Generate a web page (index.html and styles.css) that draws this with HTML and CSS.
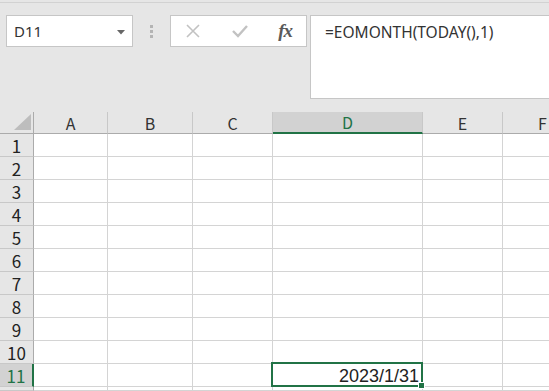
FILE: index.html
```html
<!DOCTYPE html>
<html lang="zh">
<head>
    <meta charset="UTF-8">
    <title>EOMONTH</title>
    <link rel="stylesheet" href="styles.css">
</head>
<body>
    <div class="toolbar">
        <div class="name-box">
            <span>D11</span>
            <svg class="arrow" width="8" height="5" viewBox="0 0 8 5"><polygon points="0,0 8,0 4,4.5" fill="#666"/></svg>
        </div>
        <div class="grip"><i></i><i></i><i></i></div>
        <div class="fx-buttons">
            <svg width="16" height="16" viewBox="0 0 16 16"><path d="M2 2 L14 14 M14 2 L2 14" stroke="#c2c2c2" stroke-width="1.6" fill="none"/></svg>
            <svg width="18" height="16" viewBox="0 0 18 16"><path d="M2 8 L7 13 L16 3" stroke="#c2c2c2" stroke-width="2.4" fill="none"/></svg>
            <span class="fx">fx</span>
        </div>
        <div class="formula">=EOMONTH(TODAY(),1)</div>
    </div>

    <div class="sheet">
        <div class="cell corner"><svg width="17" height="16" viewBox="0 0 17 16"><polygon points="17,0 17,16 0,16" fill="#bdbdbd"/></svg></div>
        <div class="cell col-head">A</div>
        <div class="cell col-head">B</div>
        <div class="cell col-head">C</div>
        <div class="cell col-head active">D</div>
        <div class="cell col-head">E</div>
        <div class="cell col-head edge">F</div>

        <div class="cell row-head">1</div><div class="cell"></div><div class="cell"></div><div class="cell"></div><div class="cell"></div><div class="cell"></div><div class="cell"></div>
        <div class="cell row-head">2</div><div class="cell"></div><div class="cell"></div><div class="cell"></div><div class="cell"></div><div class="cell"></div><div class="cell"></div>
        <div class="cell row-head">3</div><div class="cell"></div><div class="cell"></div><div class="cell"></div><div class="cell"></div><div class="cell"></div><div class="cell"></div>
        <div class="cell row-head">4</div><div class="cell"></div><div class="cell"></div><div class="cell"></div><div class="cell"></div><div class="cell"></div><div class="cell"></div>
        <div class="cell row-head">5</div><div class="cell"></div><div class="cell"></div><div class="cell"></div><div class="cell"></div><div class="cell"></div><div class="cell"></div>
        <div class="cell row-head">6</div><div class="cell"></div><div class="cell"></div><div class="cell"></div><div class="cell"></div><div class="cell"></div><div class="cell"></div>
        <div class="cell row-head">7</div><div class="cell"></div><div class="cell"></div><div class="cell"></div><div class="cell"></div><div class="cell"></div><div class="cell"></div>
        <div class="cell row-head">8</div><div class="cell"></div><div class="cell"></div><div class="cell"></div><div class="cell"></div><div class="cell"></div><div class="cell"></div>
        <div class="cell row-head">9</div><div class="cell"></div><div class="cell"></div><div class="cell"></div><div class="cell"></div><div class="cell"></div><div class="cell"></div>
        <div class="cell row-head">10</div><div class="cell"></div><div class="cell"></div><div class="cell"></div><div class="cell"></div><div class="cell"></div><div class="cell"></div>
        <div class="cell row-head active">11</div><div class="cell"></div><div class="cell"></div><div class="cell"></div><div class="cell value selected">2023/1/31</div><div class="cell"></div><div class="cell"></div>
        <div class="cell row-head"></div><div class="cell"></div><div class="cell"></div><div class="cell"></div><div class="cell"></div><div class="cell"></div><div class="cell"></div>
    </div>
</body>
</html>
```

FILE: styles.css
```css
/* 全体 */
html, body {
    overflow: hidden;
}

body {
    margin: 0;
    height: 391px;
    background-color: #e6e6e6;
    font-family: 'Noto Sans', 'Noto Sans CJK SC', sans-serif;
    color: #222;
}

/* 数式バー */
.toolbar {
    display: flex;
    align-items: flex-start;
    margin-top: 2px;
    border-top: 1px solid #d2d2d2;
    padding-top: 12px;
    margin-bottom: 13px;
    height: 84px;
}

.name-box {
    margin-left: 6px;
    width: 127px;
    height: 32px;
    box-sizing: border-box;
    border: 1px solid #c6c6c6;
    background-color: #fff;
    display: flex;
    align-items: center;
    justify-content: space-between;
    padding: 0 7px 0 7px;
    font-size: 15px;
    color: #333;
}

.name-box .arrow {
    margin-top: 2px;
}

.grip {
    width: 37px;
    height: 32px;
    display: flex;
    flex-direction: column;
    align-items: center;
    justify-content: center;
    gap: 2px;
}

.grip i {
    display: block;
    width: 3px;
    height: 3px;
    background-color: #b4b4b4;
}

.fx-buttons {
    width: 137px;
    height: 32px;
    box-sizing: border-box;
    border: 1px solid #c6c6c6;
    background-color: #fff;
    display: flex;
    align-items: center;
    justify-content: space-between;
    padding: 0 14px 0 14px;
}

.fx {
    font-family: 'Liberation Serif', 'DejaVu Serif', serif;
    font-style: italic;
    font-weight: bold;
    font-size: 19px;
    color: #5a5a5a;
    letter-spacing: -1px;
}

.formula {
    flex: 1;
    margin-left: 3px;
    height: 84px;
    box-sizing: border-box;
    border: 1px solid #c6c6c6;
    border-right: none;
    background-color: #fff;
    padding: 5px 14px;
    font-size: 15.5px;
    color: #333;
}

/* シート */
.sheet {
    display: grid;
    grid-template-columns: 34px 74px 85px 80px 150px 80px 1fr;
    grid-template-rows: 22px repeat(11, 23px) 1fr;
    height: 279px;
    background-color: #fff;
}

.cell {
    box-sizing: border-box;
    border-right: 1px solid #d4d4d4;
    border-bottom: 1px solid #d4d4d4;
}

/* F列は画面の外まで続く */
.cell:nth-child(7n) {
    border-right: none;
}

.corner {
    background-color: #e6e6e6;
    border-right: 1px solid #ababab;
    border-bottom: 1px solid #ababab;
    display: flex;
    align-items: flex-end;
    justify-content: flex-end;
    padding: 0 2px 3px 0;
}

.col-head,
.row-head {
    background-color: #e6e6e6;
    font-family: 'Noto Sans CJK SC', sans-serif;
    line-height: 1;
    display: flex;
    align-items: center;
    justify-content: center;
}

.col-head {
    border-right: 1px solid #c8c8c8;
    border-bottom: 1px solid #ababab;
    font-size: 16px;
    color: #333;
}

.col-head.edge {
    justify-content: flex-start;
    padding-left: 35px;
}

.col-head.active {
    background-color: #d2d2d2;
    border-bottom: 2px solid #217346;
    color: #217346;
}

.row-head {
    border-right: 1px solid #ababab;
    border-bottom: 1px solid #c8c8c8;
    font-size: 17px;
    color: #222;
}

.row-head.active {
    background-color: #d2d2d2;
    border-right: 2px solid #217346;
    color: #217346;
}

.value {
    font-family: 'Liberation Sans', Arial, sans-serif;
    font-size: 18px;
    line-height: 1;
    display: flex;
    align-items: center;
    justify-content: flex-end;
    padding: 2px 3px 0 0;
}

/* 選択中のセル */
.selected {
    position: relative;
}

.selected::before {
    content: "";
    position: absolute;
    left: -2px;
    top: -2px;
    right: -1px;
    bottom: -1px;
    border: 2px solid #217346;
}

.selected::after {
    content: "";
    position: absolute;
    right: -3px;
    bottom: -3px;
    width: 5px;
    height: 5px;
    background-color: #217346;
    border: 1px solid #fff;
}
```
